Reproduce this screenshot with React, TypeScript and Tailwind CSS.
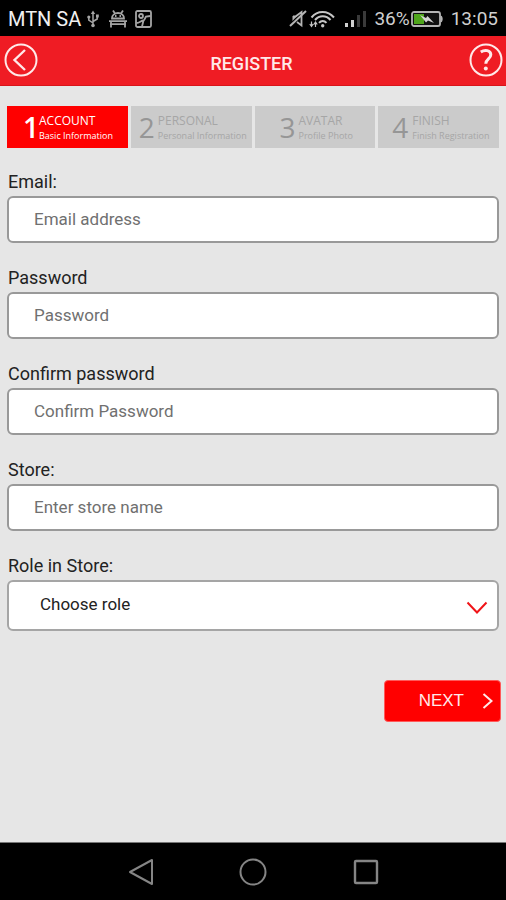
import React from 'react'

const steps = [
    { number: '1', title: 'ACCOUNT', text: 'Basic Information', place: 'pl-4 gap-0' },
    { number: '2', title: 'PERSONAL', text: 'Personal Information', place: 'pl-2 gap-[3px]' },
    { number: '3', title: 'AVATAR', text: 'Profile Photo', place: 'pl-[25px] gap-[3px]' },
    { number: '4', title: 'FINISH', text: 'Finish Registration', place: 'pl-[14px] gap-1' },
]

const fields = [
    { id: 'email', label: 'Email:', type: 'email', placeholder: 'Email address' },
    { id: 'password', label: 'Password', type: 'password', placeholder: 'Password' },
    { id: 'confirm', label: 'Confirm password', type: 'password', placeholder: 'Confirm Password' },
    { id: 'store', label: 'Store:', type: 'text', placeholder: 'Enter store name' },
]

const StatusBar = () => {
    return (
        <div className="flex h-9 items-center justify-between bg-black px-2 pt-0.5 text-[#cfcfcf]">
            <div className="flex items-center">
                <span className="text-xl leading-6 text-[#f0f0f0]">MTN SA</span>
                <svg className="ml-1.5 h-[18px] w-3" viewBox="0 0 12 18" fill="none" stroke="#a5a5a5" strokeWidth="1.500">
                    <path d="M6 3v12M6 13 1.800 10V7M6 11.500l4.200-2.500V6" />
                    <path d="M6 .5 3.800 4h4.400z" fill="#a5a5a5" stroke="none" />
                    <circle cx="6" cy="15.500" r="1.800" fill="#a5a5a5" stroke="none" />
                    <circle cx="1.800" cy="7" r="1.600" fill="#a5a5a5" stroke="none" />
                    <path d="M9 4.500h2.800V7.500H9z" fill="#a5a5a5" stroke="none" />
                </svg>
                <svg className="ml-2.5 h-[18px] w-[18px]" viewBox="0 0 18 18" fill="none" stroke="#a5a5a5" strokeWidth="1.800">
                    <path d="M3 8.500C3 5 5.800 3 9 3s6 2 6 5.500zM4 .5l2 3M14 .5l-2 3" />
                    <path d="M0 11.200h18M1 14.200h16M2 11v6.500M16 11v6.500" />
                    <path d="M6 6h1.500M10.500 6H12" />
                </svg>
                <svg className="ml-2 h-[18px] w-[17px]" viewBox="0 0 17 18" fill="none" stroke="#a5a5a5" strokeWidth="1.800">
                    <rect x="1" y="1" width="15" height="16" rx="1.500" />
                    <circle cx="6" cy="6" r="2" />
                    <path d="M1.500 13c3 0 4.500-2.500 7-2.500 1 0 1.500-2.500 2.500-4L15.500 6M8.500 10.500 7 16.500" />
                </svg>
            </div>
            <div className="flex items-center">
                <svg className="h-[18px] w-[18px]" viewBox="0 0 18 18" fill="none" stroke="#b5b5b5" strokeWidth="1.800">
                    <path d="M4 6.500h2.500L12.500 2v13.500L8 12" />
                    <path d="M1 16 17 1" strokeWidth="2" />
                    <path d="M3.500 6v5L8 6z" fill="#b5b5b5" stroke="none" />
                </svg>
                <svg className="ml-0.5 h-[18px] w-[27px]" viewBox="0 0 27 18" fill="none" stroke="#c5c5c5" strokeWidth="2">
                    <path d="M2.500 7.500c6-7.300 16-7.300 22.500 0M6 10c4.200-5 11.200-5 15.500 0M10 12.800c2.200-2.500 5.300-2.500 7.500 0" />
                    <circle cx="13.700" cy="15.700" r="1.700" fill="#c5c5c5" stroke="none" />
                    <path d="M2.500 11.500v5M.8 14l1.700 2.500L4.200 14M6.500 17v-5M4.800 14.500l1.700-2.500 1.700 2.500" strokeWidth="1.200" />
                </svg>
                <svg className="ml-2 h-[18px] w-[22px]" viewBox="0 0 22 18">
                    <path d="M1 13h3v4H1zM7 10h3v7H7z" fill="#d0d0d0" />
                    <path d="M13 5h3v12h-3zM19 1h3v16h-3z" fill="#3a3a3a" />
                </svg>
                <span className="ml-2 text-[19px] leading-6">36%</span>
                <svg className="ml-px h-[18px] w-8" viewBox="0 0 32 18">
                    <rect x="1" y="2" width="28" height="14" rx="2" fill="#111" stroke="#b5b5b5" strokeWidth="1.800" />
                    <path d="M3 4h10v10H3z" fill="#4fa51c" />
                    <path d="M30 6c1.500 0 1.500 6 0 6z" fill="#b5b5b5" stroke="#b5b5b5" />
                    <path d="m9 5 6 3 1.500-2L23 13l-6-2.500-2 2z" fill="#d5d5d5" />
                </svg>
                <span className="ml-2 text-[19px] leading-6">13:05</span>
            </div>
        </div>
    )
}

const Header = () => {
    return (
        <header className="flex h-[50px] items-center justify-between border-b border-[#d8141a] bg-[#ef1c24] pl-1 pr-[3px] text-white">
            <button type="button" aria-label="Back" className="-mt-0.5">
                <svg className="h-[34px] w-[34px]" viewBox="0 0 34 34" fill="none" stroke="#ffe9e9" strokeWidth="2">
                    <circle cx="17" cy="17" r="15.500" />
                    <path d="M21 7 10.500 17 21 27" strokeWidth="2.400" />
                </svg>
            </button>
            <h1 className="mt-1.5 pr-1 text-lg font-medium text-[#ffe9e9]">REGISTER</h1>
            <button type="button" aria-label="Help" className="-mt-0.5">
                <svg className="h-[34px] w-[34px]" viewBox="0 0 34 34" fill="none" stroke="#ffe9e9" strokeWidth="2">
                    <circle cx="17" cy="17" r="15.500" />
                    <path d="M11.800 9c4-2.600 10-2 10 2.800 0 4.200-5 4.200-5 9" strokeWidth="3" />
                    <circle cx="16.800" cy="25.500" r="2" fill="#ffe9e9" stroke="none" />
                </svg>
            </button>
        </header>
    )
}

const Steps = () => {
    return (
        <ol className="grid grid-cols-4 gap-[3px] font-['Open_Sans','Noto_Sans',sans-serif]">
            {steps.map((step, i) => (
                <li
                    key={step.number}
                    className={`flex h-[42px] items-center overflow-hidden whitespace-nowrap ${step.place} ${i === 0 ? 'bg-[#ff0000] text-white' : 'bg-[#cbcbcb] text-[#a6a6a6]'}`}
                >
                    <span className={`text-[28px] leading-8 ${i === 0 ? 'font-semibold' : 'text-[#969696]'}`}>{step.number}</span>
                    <span className="flex flex-col">
                        <span className={`text-xs leading-[17px] ${i === 0 ? 'font-medium' : ''}`}>{step.title}</span>
                        <span className={`text-[9px] leading-[13px] ${i === 0 ? 'font-medium' : ''}`}>{step.text}</span>
                    </span>
                </li>
            ))}
        </ol>
    )
}

const App = () => {
    return (
        <div className="flex min-h-screen flex-col bg-[#e6e6e6] font-[Roboto,sans-serif]">
            <StatusBar />
            <Header />

            <main className="flex-1 px-[7px] pt-5">
                <Steps />

                <form className="mt-[22px]">
                    {fields.map((field) => (
                        <div key={field.id} className="mb-[23px]">
                            <label htmlFor={field.id} className="block pl-px text-lg leading-6 text-[#222]">{field.label}</label>
                            <input
                                type={field.type}
                                id={field.id}
                                name={field.id}
                                placeholder={field.placeholder}
                                className="mt-0.5 block h-[47px] w-full rounded-md border-2 border-[#999] bg-white pb-0.5 pl-[25px] pr-4 text-[17px] text-[#222] placeholder:text-[#707070] focus:outline-none"
                            />
                        </div>
                    ))}

                    <label htmlFor="role" className="block pl-px text-lg leading-6 text-[#222]">Role in Store:</label>
                    <div className="relative mt-0.5">
                        <select
                            id="role"
                            name="role"
                            className="block h-[51px] w-full appearance-none rounded-md border-2 border-[#a5a5a5] bg-white pb-0.5 pl-[31px] pr-12 text-[17px] text-[#222] focus:outline-none"
                        >
                            <option>Choose role</option>
                        </select>
                        <svg className="pointer-events-none absolute top-[21px] right-[11px] h-3.5 w-[22px]" viewBox="0 0 22 14" fill="none" stroke="#f01418" strokeWidth="2">
                            <path d="m1.500 1.500 9.500 10 9.500-10" />
                        </svg>
                    </div>

                    <div className="-mr-0.5 mt-[49px] flex justify-end">
                        <button
                            type="submit"
                            className="flex h-[42px] w-[117px] items-center justify-end rounded-sm border border-[#ff5a5a] bg-[#ff0000] pr-[7px] font-['Liberation_Sans',Arial,sans-serif] text-[17px] text-[#ffe9e9]"
                        >
                            NEXT
                            <svg className="ml-[18px] h-4 w-[11px]" viewBox="0 0 11 16" fill="none" stroke="#ffe9e9" strokeWidth="2">
                                <path d="m1.500 1 8 7-8 7" />
                            </svg>
                        </button>
                    </div>
                </form>
            </main>

            <nav className="flex h-[58px] items-center justify-center gap-[86px] border-t border-[#777] bg-black">
                <button type="button" aria-label="Back">
                    <svg className="h-7 w-[26px]" viewBox="0 0 26 28" fill="none" stroke="#858585" strokeWidth="2" strokeLinejoin="round">
                        <path d="M25 2v24L3 14z" />
                    </svg>
                </button>
                <button type="button" aria-label="Home">
                    <svg className="h-7 w-7" viewBox="0 0 28 28" fill="none" stroke="#858585" strokeWidth="2">
                        <circle cx="14" cy="14" r="12.500" />
                    </svg>
                </button>
                <button type="button" aria-label="Recent apps">
                    <svg className="h-[26px] w-[26px]" viewBox="0 0 26 26" fill="none" stroke="#858585" strokeWidth="2.400">
                        <rect x="2" y="2" width="22" height="22" rx="1" />
                    </svg>
                </button>
            </nav>
        </div>
    )
}

export default App
